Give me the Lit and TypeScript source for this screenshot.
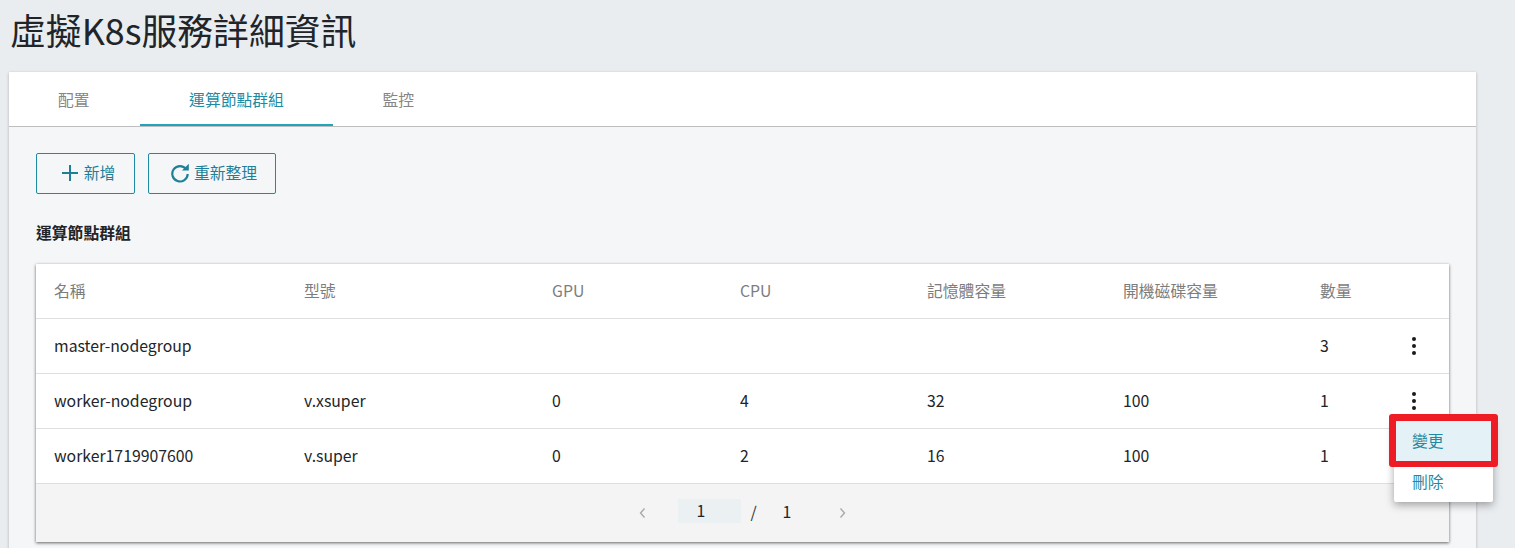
import { LitElement, html, css, nothing } from "lit";
import { customElement } from "lit/decorators.js";

const COLS = ["名稱", "型號", "GPU", "CPU", "記憶體容量", "開機磁碟容量", "數量"];
const ROWS = [
  ["master-nodegroup", "", "", "", "", "", "3"],
  ["worker-nodegroup", "v.xsuper", "0", "4", "32", "100", "1"],
  ["worker1719907600", "v.super", "0", "2", "16", "100", "1"],
];

@customElement("app-root")
export class AppRoot extends LitElement {
  static styles = css`
    :host {
      display: block;
      width: 1515px;
      height: 548px;
      overflow: hidden;
      background: #eaedf0;
      font-family: "Noto Sans CJK TC", "Noto Sans", sans-serif;
      color: #212529;
      font-size: 15.8px;
    }
    .page { padding: 0 39px 0 9px; }
    h1 {
      margin: 0;
      font-size: 35.84px;
      font-weight: 400;
      line-height: 48px;
      height: 72px;
      padding: 5px 0 0 1px;
      box-sizing: border-box;
      color: #212529;
    }
    .card {
      background: #f4f6f8;
      box-shadow: 0 1px 3px rgba(0, 0, 0, 0.25);
      height: 520px;
    }
    .tabs {
      display: flex;
      background: #fff;
      height: 55px;
      box-sizing: border-box;
      border-bottom: 1px solid #bdbdbd;
    }
    .tab {
      padding: 0 49px;
      line-height: 56px;
      height: 54px;
      box-sizing: border-box;
      color: #868686;
    }
    .tab.active {
      padding: 0 49.5px;
      color: #1f8ba3;
      border-bottom: 2px solid #22a4bd;
    }
    .tab.first { padding: 0 50px 0 49px; }
    .content { padding: 26px 27px 0 27px; }
    .actions { display: flex; gap: 13px; }
    button {
      display: flex;
      align-items: center;
      justify-content: center;
      height: 41px;
      box-sizing: border-box;
      background: transparent;
      border: 1px solid #1f8ba3;
      border-radius: 2px;
      color: #1f7f96;
      font: inherit;
      padding: 0 0 2px;
    }
    .add { width: 99px; gap: 6px; padding-left: 6px; }
    .refresh { width: 128px; gap: 4px; padding-left: 3px; }
    h2 {
      margin: 27px 0 19px;
      font-size: 15.8px;
      line-height: 24px;
      font-weight: 700;
      color: #212529;
    }
    .table {
      position: relative;
      background: #fff;
      box-shadow: 0 1px 3px rgba(0, 0, 0, 0.6);
    }
    .row {
      display: grid;
      grid-template-columns: 268px 248px 188px 187px 196px 197px 91px 38px;
      height: 55px;
      align-items: center;
      border-bottom: 1px solid #dfdfdf;
      box-sizing: border-box;
    }
    .row.head { color: #7d7d7d; }
    .row > div:first-child { padding-left: 18px; }
    .row > div { white-space: nowrap; line-height: 24px; }
    .kebab { display: flex; }
    .foot {
      height: 58px;
      background: #f4f4f4;
      display: flex;
      justify-content: center;
      align-items: center;
      color: #212529;
    }
    .pager {
      display: grid;
      grid-template-columns: 40px 63px 41px 56px 10px;
      align-items: center;
    }
    .pager svg { display: block; }
    .cur {
      background: #ebf0f3;
      height: 24px;
      line-height: 24px;
      padding-left: 19px;
      box-sizing: border-box;
      margin-bottom: 4px;
    }
    .slash { padding: 0 0 3px 10px; line-height: 24px; color: #333; }
    .tot { line-height: 24px; padding: 0 0 3px 1px; }
    .menu {
      position: absolute;
      left: 1358px;
      top: 156px;
      width: 99px;
      background: #fff;
      border-radius: 2px;
      box-shadow: 0 3px 8px rgba(0, 0, 0, 0.35);
      color: #1f8ba3;
    }
    .item {
      height: 41px;
      line-height: 41px;
      padding-left: 18px;
      box-sizing: border-box;
    }
    .item.on { background: #e4f1f7; }
    .mark {
      position: absolute;
      left: 1353px;
      top: 150px;
      width: 109px;
      height: 53px;
      box-sizing: border-box;
      border-style: solid;
      border-color: #ee1c25;
      border-width: 7px 7px 6px;
      border-radius: 3px;
    }
  `;

  private dots() {
    return html`<svg width="6" height="18" viewBox="0 0 6 18" aria-hidden="true">
      <circle cx="3" cy="2" r="2" fill="#1a1a1a"></circle>
      <circle cx="3" cy="9" r="2" fill="#1a1a1a"></circle>
      <circle cx="3" cy="16" r="2" fill="#1a1a1a"></circle>
    </svg>`;
  }

  render() {
    return html`
      <div class="page">
        <h1>虛擬K8s服務詳細資訊</h1>
        <div class="card">
          <div class="tabs">
            <div class="tab first">配置</div>
            <div class="tab active">運算節點群組</div>
            <div class="tab">監控</div>
          </div>
          <div class="content">
            <div class="actions">
              <button class="add">
                <svg width="16" height="16" viewBox="0 0 16 16" aria-hidden="true">
                  <path d="M8 0v16M0 8h16" stroke="#1f7f96" stroke-width="2" fill="none"></path>
                </svg>
                新增
              </button>
              <button class="refresh">
                <svg width="20" height="20" viewBox="0 0 20 20" aria-hidden="true">
                  <path d="M16.2 6.2A7.7 7.7 0 1 0 17.7 11" stroke="#1f7f96" stroke-width="2.2" fill="none"></path>
                  <path d="M12 7.6h6.8V.8z" fill="#1f7f96"></path>
                </svg>
                重新整理
              </button>
            </div>
            <h2>運算節點群組</h2>
            <div class="table">
              <div class="row head">
                ${COLS.map((c) => html`<div>${c}</div>`)}
                <div></div>
              </div>
              ${ROWS.map(
                (r) => html`<div class="row">
                  ${r.map((c) => html`<div>${c || nothing}</div>`)}
                  <div class="kebab">${this.dots()}</div>
                </div>`
              )}
              <div class="foot">
                <div class="pager">
                  <svg width="10" height="12" viewBox="0 0 10 12" aria-hidden="true">
                    <path d="M6.5 1.5 2.5 6l4 4.5" stroke="#a9a9a9" stroke-width="1.4" fill="none"></path>
                  </svg>
                  <div class="cur">1</div>
                  <div class="slash">/</div>
                  <div class="tot">1</div>
                  <svg width="10" height="12" viewBox="0 0 10 12" aria-hidden="true">
                    <path d="M2.5 1.5 6.5 6l-4 4.5" stroke="#a9a9a9" stroke-width="1.4" fill="none"></path>
                  </svg>
                </div>
              </div>
              <div class="menu">
                <div class="item on">變更</div>
                <div class="item">刪除</div>
              </div>
              <div class="mark"></div>
            </div>
          </div>
        </div>
      </div>
    `;
  }
}
